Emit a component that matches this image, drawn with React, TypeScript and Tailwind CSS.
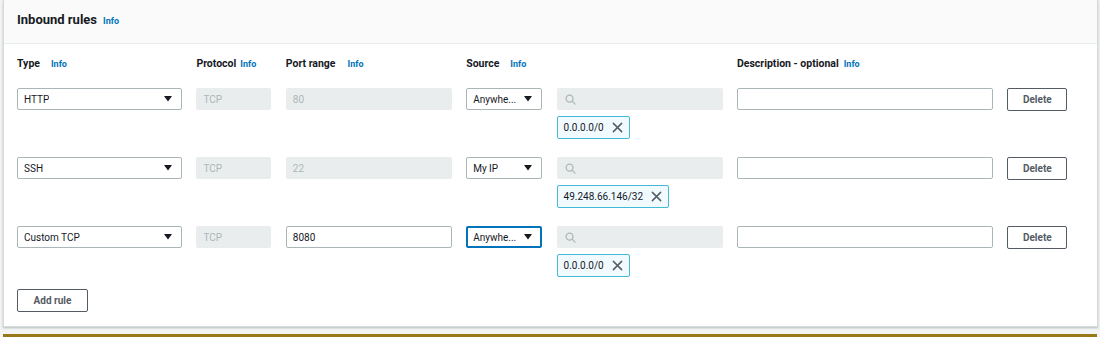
const font = { fontFamily: "Roboto, 'Noto Sans', Arial, sans-serif" };

type Rule = {
  type: string;
  port: string;
  portEditable: boolean;
  source: string;
  sourceFocused: boolean;
  cidr: string;
};

const rules: Rule[] = [
  { type: "HTTP", port: "80", portEditable: false, source: "Anywhe...", sourceFocused: false, cidr: "0.0.0.0/0" },
  { type: "SSH", port: "22", portEditable: false, source: "My IP", sourceFocused: false, cidr: "49.248.66.146/32" },
  { type: "Custom TCP", port: "8080", portEditable: true, source: "Anywhe...", sourceFocused: true, cidr: "0.0.0.0/0" },
];

const Caret = () => (
  <svg width="8" height="6" viewBox="0 0 8 6">
    <path d="M0 0 H8 L4 5.5 Z" fill="#16191f" />
  </svg>
);

const SearchIcon = () => (
  <svg width="11" height="11" viewBox="0 0 12 12" fill="none" stroke="#aab7b8" strokeWidth="1.4">
    <circle cx="5" cy="5" r="3.8" />
    <path d="M7.8 7.8 L11 11" strokeLinecap="round" />
  </svg>
);

const CloseIcon = () => (
  <svg width="11" height="11" viewBox="0 0 12 12" fill="none" stroke="#545b64" strokeWidth="1.6">
    <path d="M1.5 1.5 L10.5 10.5 M10.5 1.5 L1.5 10.5" strokeLinecap="round" />
  </svg>
);

const Info = ({ className = "" }: { className?: string }) => (
  <span className={`text-[9px] font-bold text-[#0073bb] ${className}`}>Info</span>
);

const Label = ({ text, gap }: { text: string; gap: string }) => (
  <div className="flex items-baseline h-[14px]">
    <span className="text-[10.5px] font-bold text-[#16191f]">{text}</span>
    <Info className={gap} />
  </div>
);

const Select = ({ value, focused }: { value: string; focused?: boolean }) => (
  <div
    className={`h-[22px] flex items-center justify-between bg-white rounded-[2px] ${
      focused ? "border-2 border-[#0073bb] pl-[5px] pr-[8px]" : "border border-[#aab7b8] pl-[6px] pr-[9px]"
    }`}
  >
    <span className="text-[10px] text-[#16191f] truncate">{value}</span>
    <Caret />
  </div>
);

const Disabled = ({ value }: { value: string }) => (
  <div className="h-[22px] flex items-center px-[7px] bg-[#eaeded] rounded-[2px] text-[10px] text-[#aab7b8]">
    {value}
  </div>
);

const TextInput = ({ value }: { value?: string }) => (
  <div className="h-[22px] flex items-center px-[6px] bg-white border border-[#aab7b8] rounded-[2px] text-[10px] text-[#16191f]">
    {value}
  </div>
);

const DeleteButton = () => (
  <button className="h-[23px] w-[60px] border border-[#545b64] rounded-[2px] bg-white text-[10px] font-bold text-[#545b64]">
    Delete
  </button>
);

export default function App() {
  return (
    <div className="w-[1100px] h-[337px] bg-[#f2f3f3] overflow-hidden" style={font}>
      <div className="mx-[3px] w-[1095px] h-[327px] bg-white border border-t-0 border-[#d5dbdb] shadow-[0_1px_2px_rgba(0,28,36,0.25)] flex flex-col">
        <div className="h-[44px] bg-[#fafafa] border-b border-[#eaeded] flex items-center pl-[13px] pb-[3px]">
          <span className="text-[13px] font-bold text-[#16191f]">Inbound rules</span>
          <Info className="ml-[6px] mt-[3px]" />
        </div>

        <div className="pl-[13px] pt-[12px]">
          <div className="grid grid-cols-[165px_75px_166px_76px_166px_256px_60px] gap-x-[14.4px]">
            <Label text="Type" gap="ml-[11px]" />
            <Label text="Protocol" gap="ml-[4px]" />
            <Label text="Port range" gap="ml-[12px]" />
            <Label text="Source" gap="ml-[11px]" />
            <div />
            <Label text="Description - optional" gap="ml-[5px]" />
            <div />
          </div>

          <div className="flex flex-col gap-[18px] mt-[18px]">
            {rules.map((r) => (
              <div
                key={r.type}
                className="grid grid-cols-[165px_75px_166px_76px_166px_256px_60px] gap-x-[14.4px] items-start"
              >
                <Select value={r.type} />
                <Disabled value="TCP" />
                {r.portEditable ? <TextInput value={r.port} /> : <Disabled value={r.port} />}
                <Select value={r.source} focused={r.sourceFocused} />
                <div className="flex flex-col items-start">
                  <div className="w-full h-[22px] flex items-center px-[8px] bg-[#eaeded] rounded-[2px]">
                    <SearchIcon />
                  </div>
                  <div className="mt-[6px] h-[23px] flex items-center gap-[8px] pl-[6px] pr-[6px] border border-[#44b9d6] bg-[#f1faff] rounded-[2px]">
                    <span className="text-[10px] text-[#16191f]">{r.cidr}</span>
                    <CloseIcon />
                  </div>
                </div>
                <TextInput />
                <DeleteButton />
              </div>
            ))}
          </div>

          <button className="mt-[12px] h-[23px] w-[71px] border border-[#545b64] rounded-[2px] bg-white text-[10px] font-bold text-[#545b64]">
            Add rule
          </button>
        </div>
      </div>
      <div className="mx-[3px] mt-[7px] h-[3px] bg-[#977718]" />
    </div>
  );
}
